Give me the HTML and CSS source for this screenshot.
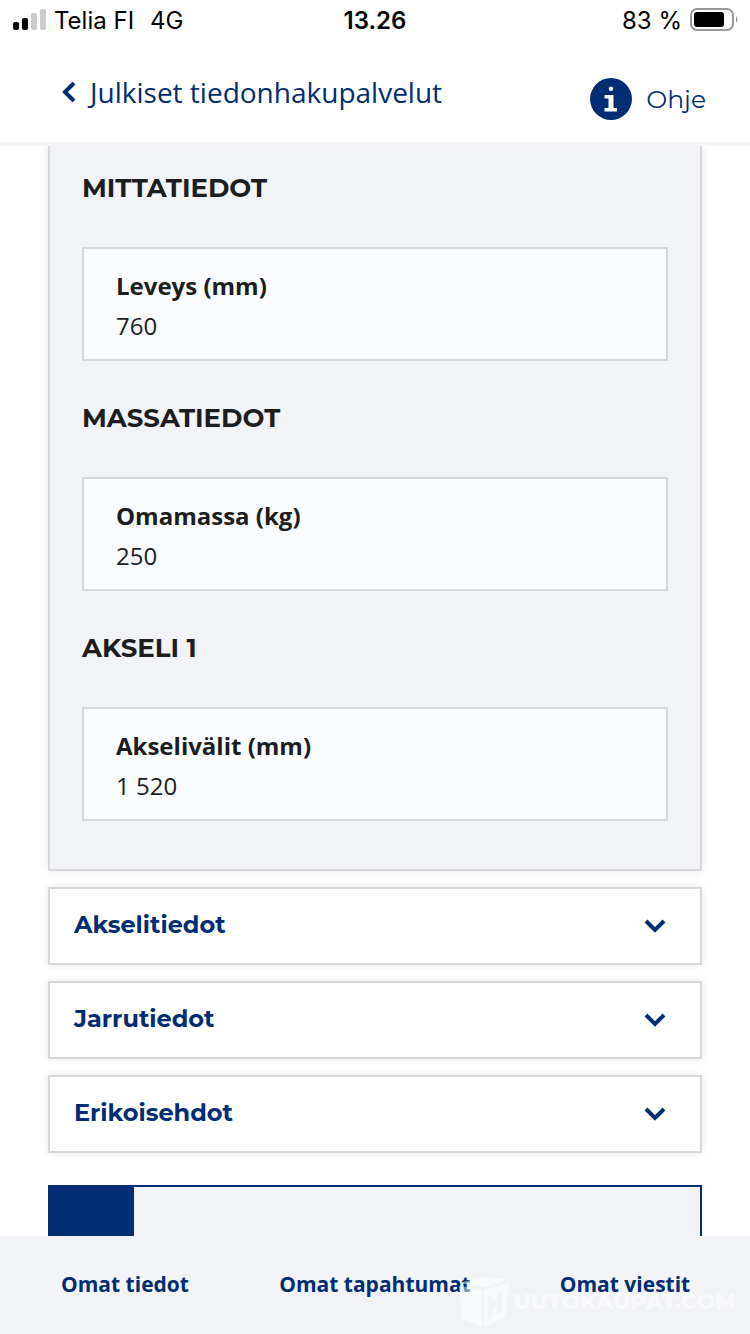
FILE: index.html
```html
<!DOCTYPE html>
<html lang="fi">
<head>
    <meta charset="UTF-8">
    <meta name="viewport" content="width=device-width, initial-scale=1.0">
    <title>Julkiset tiedonhakupalvelut</title>
    <link rel="stylesheet" href="styles.css">
</head>
<body>

    <!-- Status bar -->
    <div class="status">
        <div class="status-left">
            <svg class="signal" width="34" height="22" viewBox="0 0 34 22" aria-hidden="true">
                <rect x="1" y="13" width="6" height="8" rx="2"/>
                <rect x="10" y="9" width="6" height="12" rx="2"/>
                <rect class="off" x="19" y="4" width="6" height="17" rx="2"/>
                <rect class="off" x="28" y="0" width="6" height="21" rx="2"/>
            </svg>
            <span>Telia FI</span>
            <span class="network">4G</span>
        </div>
        <span class="time">13.26</span>
        <div class="status-right">
            <span>83 %</span>
            <svg width="48" height="24" viewBox="0 0 48 24" aria-hidden="true">
                <rect x="1" y="1" width="42" height="21" rx="6" fill="#fff" stroke="#999" stroke-width="2"/>
                <rect x="4" y="4" width="30" height="15" rx="3"/>
                <path d="M46 8Q49 11.500 46 15Z" fill="#999"/>
            </svg>
        </div>
    </div>

    <!-- Header -->
    <header class="header">
        <a class="back" href="#">
            <svg width="14" height="20" viewBox="0 0 14 20" aria-hidden="true">
                <path d="M12 1L3 10L12 19" fill="none" stroke="currentColor" stroke-width="4"/>
            </svg>
            Julkiset tiedonhakupalvelut
        </a>
        <a class="help" href="#">
            <svg width="42" height="42" viewBox="0 0 42 42" aria-hidden="true">
                <circle cx="21" cy="21" r="21" fill="currentColor"/>
                <circle cx="21" cy="10.700" r="2.200" fill="#fff"/>
                <path d="M14.500 17H23.500V30H27V33.500H14.500V30H18.500V20.500H14.500Z" fill="#fff"/>
            </svg>
            Ohje
        </a>
    </header>

    <main class="content">
        <section class="panel">
            <h2>MITTATIEDOT</h2>
            <dl class="field">
                <dt>Leveys (mm)</dt>
                <dd>760</dd>
            </dl>
            <h2>MASSATIEDOT</h2>
            <dl class="field">
                <dt>Omamassa (kg)</dt>
                <dd>250</dd>
            </dl>
            <h2>AKSELI 1</h2>
            <dl class="field">
                <dt>Akselivälit (mm)</dt>
                <dd>1 520</dd>
            </dl>
        </section>

        <button class="accordion" type="button" aria-expanded="false">
            <span>Akselitiedot</span>
            <svg width="22" height="14" viewBox="0 0 22 14" aria-hidden="true">
                <path d="M2 2L11 11L20 2" fill="none" stroke="currentColor" stroke-width="4"/>
            </svg>
        </button>
        <button class="accordion" type="button" aria-expanded="false">
            <span>Jarrutiedot</span>
            <svg width="22" height="14" viewBox="0 0 22 14" aria-hidden="true">
                <path d="M2 2L11 11L20 2" fill="none" stroke="currentColor" stroke-width="4"/>
            </svg>
        </button>
        <button class="accordion" type="button" aria-expanded="false">
            <span>Erikoisehdot</span>
            <svg width="22" height="14" viewBox="0 0 22 14" aria-hidden="true">
                <path d="M2 2L11 11L20 2" fill="none" stroke="currentColor" stroke-width="4"/>
            </svg>
        </button>

        <div class="notice">
            <div class="notice-icon"></div>
        </div>
    </main>

    <!-- Bottom navigation -->
    <nav class="bottom-nav">
        <a href="#">Omat tiedot</a>
        <a href="#">Omat tapahtumat</a>
        <a href="#">Omat viestit</a>
    </nav>

    <div class="watermark">
        <svg width="52" height="52" viewBox="0 0 52 52" aria-hidden="true">
            <path d="M1 7L24 1L51 3L28 11Z"/>
            <path d="M1 10L24 14V51L4 43Z"/>
            <path fill-rule="evenodd" d="M26 14L51 6L48 41L26 51ZM30 20V43L35 41V32L39 30V39L44 36V14L39 16V24L35 26V18Z"/>
        </svg>
        <span>UUTOKAUPAT.COM</span>
    </div>

</body>
</html>
```

FILE: styles.css
```css
* {
    box-sizing: border-box;
}

body {
    margin: 0;
    height: 100vh;
    display: flex;
    flex-direction: column;
    overflow: hidden;
    background: #fff;
    color: #1b1d1f;
    font-family: "Open Sans", sans-serif;
    font-size: 24px;
}

a {
    color: #002d73;
    text-decoration: none;
}

/* Status bar */
.status {
    display: grid;
    grid-template-columns: 1fr auto 1fr;
    align-items: center;
    height: 40px;
    padding: 0 12px;
    color: #000;
    font-family: "Inter", sans-serif;
}

.status-left,
.status-right {
    display: flex;
    align-items: center;
    gap: 8px;
}

.status-right {
    justify-content: flex-end;
}

.signal .off {
    fill: #ccc;
}

.network {
    margin-left: 8px;
}

.time {
    font-weight: 600;
}

/* Header */
.header {
    display: flex;
    justify-content: space-between;
    height: 106px;
    padding: 32px 44px 0 62px;
    border-bottom: 4px solid #f5f5f7;
}

.back {
    display: flex;
    align-items: center;
    gap: 14px;
    height: 40px;
    font-size: 28px;
}

.help {
    display: flex;
    align-items: center;
    gap: 14px;
    height: 54px;
    font-family: "Montserrat", "Inter", sans-serif;
    font-size: 25px;
}

/* Content */
.content {
    flex: 1;
    min-height: 0;
    overflow: hidden;
    display: flex;
    flex-direction: column;
    gap: 16px;
    padding: 0 48px;
}

.content > * {
    flex-shrink: 0;
}

.panel {
    padding: 25px 32px 8px;
    border: 2px solid #d6d7db;
    border-top: 0;
    background: #f2f3f7;
    box-shadow: 0 0 8px rgba(0, 0, 0, 0.1);
}

.panel h2 {
    margin: 0 0 42px;
    font-family: "Montserrat", "Inter", sans-serif;
    font-size: 26px;
    font-weight: 700;
    line-height: 34px;
}

.field {
    margin: 0 0 40px;
    padding: 17px 32px 13px;
    border: 2px solid #d6d7db;
    background: #fafbfd;
    line-height: 40px;
}

.field dt {
    font-weight: 700;
}

.field dd {
    margin: 0;
}

.accordion {
    display: flex;
    justify-content: space-between;
    align-items: center;
    height: 78px;
    padding: 0 34px 0 24px;
    border: 2px solid #d6d7db;
    background: #fff;
    box-shadow: 0 0 8px rgba(0, 0, 0, 0.1);
    color: #002d73;
    font-family: "Montserrat", "Inter", sans-serif;
    font-size: 24px;
    font-weight: 700;
}

.accordion span {
    padding-bottom: 4px;
}

.notice {
    display: flex;
    height: 120px;
    margin-top: 16px;
    border: 2px solid #002d73;
    background: #f2f3f7;
}

.notice-icon {
    width: 84px;
    background: #002d73;
}

/* Bottom navigation */
.bottom-nav {
    display: grid;
    grid-template-columns: repeat(3, 1fr);
    height: 98px;
    padding-bottom: 2px;
    background: #f2f3f7;
}

.bottom-nav a {
    display: flex;
    align-items: center;
    justify-content: center;
    font-size: 21px;
    font-weight: 700;
    line-height: 24px;
}

/* Logo laid over the page corner */
.watermark {
    position: absolute;
    right: 14px;
    bottom: 6px;
    display: flex;
    align-items: center;
    gap: 4px;
    color: #fff;
    fill: #fff;
    font-family: "Montserrat", "Inter", sans-serif;
    font-size: 22px;
    font-weight: 800;
    line-height: 18px;
    opacity: 0.5;
    pointer-events: none;
}
```
